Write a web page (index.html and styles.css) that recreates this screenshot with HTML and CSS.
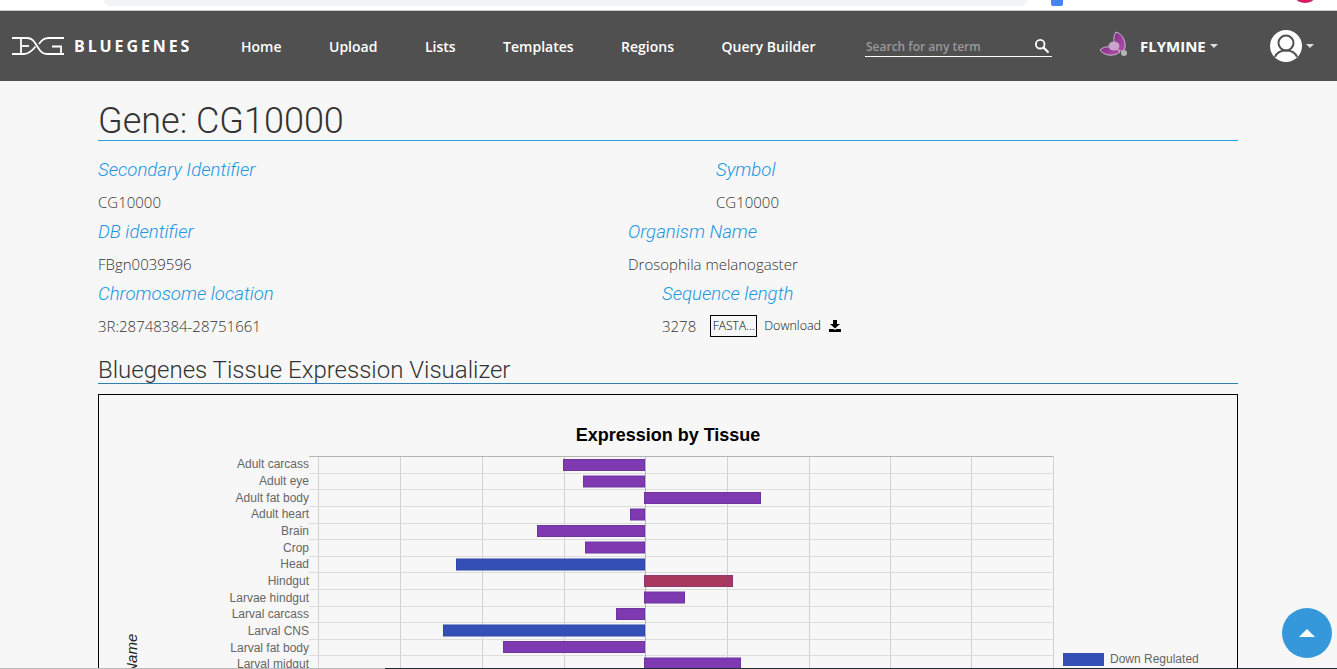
FILE: index.html
```html
<!DOCTYPE html>
<html lang="en">
<head>
	<meta charset="UTF-8">
	<title>BlueGenes</title>
	<link rel="stylesheet" href="styles.css">
</head>
<body>
	<div class="topstrip">
		<div class="urlbar"></div>
		<div class="ext-blue"></div>
		<div class="ext-pink"></div>
	</div>
	<nav class="navbar">
		<a class="brand">
			<svg class="brand-logo" width="54" height="20" viewBox="0 0 54 20" fill="none" stroke="#fff" stroke-width="1.800">
				<path d="M1 2H16C21 2 23 5 26 10C29 15 31 18 36 18H53"/>
				<path d="M1 18H13C18 18 21 15 24.500 10.500"/>
				<path d="M28 8C31 4 33 2 38 2H53"/>
				<path d="M10 2V18"/>
				<path d="M10 10H18"/>
				<path d="M41 10.500H50V18"/>
			</svg>
			<span class="brand-name">BLUEGENES</span>
		</a>
		<ul class="nav-links">
			<li>Home</li>
			<li>Upload</li>
			<li>Lists</li>
			<li>Templates</li>
			<li>Regions</li>
			<li>Query Builder</li>
		</ul>
		<div class="search">
			<span class="search-text">Search for any term</span>
			<svg width="16" height="16" viewBox="0 0 16 16" fill="none" stroke="#fff" stroke-width="1.800">
				<circle cx="6.200" cy="6.200" r="4.300"/>
				<path d="M9.500 9.500L14.500 14.500" stroke-width="2.200"/>
			</svg>
		</div>
		<div class="mine">
			<svg class="mine-logo" width="30" height="27" viewBox="0 0 30 27">
				<defs>
					<linearGradient id="wing" x1="0" y1="0" x2="1" y2="1">
						<stop offset="0" stop-color="#7d2f80"/>
						<stop offset="1" stop-color="#b84fb5"/>
					</linearGradient>
				</defs>
				<path d="M17 1C23 3 27 9 26 17C25 20 22 21 20 19C15 15 13 7 17 1Z" fill="url(#wing)" stroke="#c9b9c9" stroke-width="1"/>
				<path d="M1 19C6 14 14 15 21 21C15 26 5 25 1 19Z" fill="url(#wing)" stroke="#c9b9c9" stroke-width="1"/>
				<ellipse cx="15" cy="15" rx="5.500" ry="4.500" fill="#c9a3cc"/>
				<circle cx="25" cy="22" r="3" fill="#b5b5b5"/>
			</svg>
			<span class="mine-name">FLYMINE</span>
			<span class="caret"></span>
		</div>
		<div class="user">
			<svg width="32" height="32" viewBox="0 0 32 32">
				<circle cx="16" cy="16" r="16" fill="#fff"/>
				<circle cx="16" cy="13" r="7.500" fill="none" stroke="#505050" stroke-width="2"/>
				<path d="M5 27C7 22 11 20.500 16 20.500C21 20.500 25 22 27 27" fill="none" stroke="#505050" stroke-width="2"/>
			</svg>
			<span class="caret"></span>
		</div>
	</nav>

	<main class="report">
		<h1 class="report-title">Gene: CG10000</h1>
		<div class="fields">
			<div class="field-row">
				<div class="field field-left">
					<div class="field-name">Secondary Identifier</div>
					<div class="field-value">CG10000</div>
				</div>
				<div class="field field-symbol">
					<div class="field-name">Symbol</div>
					<div class="field-value">CG10000</div>
				</div>
			</div>
			<div class="field-row">
				<div class="field field-left">
					<div class="field-name">DB identifier</div>
					<div class="field-value">FBgn0039596</div>
				</div>
				<div class="field">
					<div class="field-name">Organism Name</div>
					<div class="field-value">Drosophila melanogaster</div>
				</div>
			</div>
			<div class="field-row">
				<div class="field field-left">
					<div class="field-name">Chromosome location</div>
					<div class="field-value">3R:28748384-28751661</div>
				</div>
				<div class="field field-seq">
					<div class="field-name">Sequence length</div>
					<div class="field-value seq-row">
						<span>3278</span>
						<span class="fasta">FASTA...</span>
						<span class="download">Download</span>
						<svg width="14" height="12" viewBox="0 0 14 12" fill="#000">
							<path d="M5 0H9V4H12L7 8.500L2 4H5Z"/>
							<path d="M1 9H5.500L7 10L8.500 9H13V12H1Z"/>
						</svg>
					</div>
				</div>
			</div>
		</div>
		<h2 class="section-title">Bluegenes Tissue Expression Visualizer</h2>
		<div class="chart-box">
			<svg class="chart" width="1138" height="274" viewBox="0 0 1138 274">
				<text class="chart-title" x="569" y="46">Expression by Tissue</text>
				<g class="grid">
					<path class="grid-v" d="M219 61V274M301 61V274M383 61V274M465 61V274M628 61V274M710 61V274M791 61V274M872 61V274M954 61V274"/>
					<path class="grid-h" d="M210 78H954M210 94H954M210 111H954M210 128H954M210 144H954M210 161H954M210 177H954M210 194H954M210 211H954M210 227H954M210 244H954M210 260H954"/>
					<path class="grid-axis" d="M210 61H954M546 61V274"/>
				</g>
				<g class="labels">
					<text x="210" y="73">Adult carcass</text>
					<text x="210" y="90">Adult eye</text>
					<text x="210" y="107">Adult fat body</text>
					<text x="210" y="123">Adult heart</text>
					<text x="210" y="140">Brain</text>
					<text x="210" y="157">Crop</text>
					<text x="210" y="173">Head</text>
					<text x="210" y="190">Hindgut</text>
					<text x="210" y="207">Larvae hindgut</text>
					<text x="210" y="223">Larval carcass</text>
					<text x="210" y="240">Larval CNS</text>
					<text x="210" y="257">Larval fat body</text>
					<text x="210" y="273">Larval midgut</text>
				</g>
				<g class="bars" transform="translate(-0.500,0)">
					<rect class="mid" x="465" y="64.500" width="81" height="11"/>
					<rect class="mid" x="485" y="81" width="61" height="11"/>
					<rect class="mid" x="546" y="97.500" width="116" height="11"/>
					<rect class="mid" x="532" y="114" width="14" height="11"/>
					<rect class="mid" x="439" y="130.500" width="107" height="11"/>
					<rect class="mid" x="487" y="147" width="59" height="11"/>
					<rect class="down" x="358" y="164" width="188" height="11"/>
					<rect class="up" x="546" y="180.500" width="88" height="11"/>
					<rect class="mid" x="546" y="197" width="40" height="11"/>
					<rect class="mid" x="518" y="213.500" width="28" height="11"/>
					<rect class="down" x="345" y="230" width="201" height="11"/>
					<rect class="mid" x="405" y="246.500" width="141" height="11"/>
					<rect class="mid" x="546" y="263" width="96" height="11"/>
				</g>
				<text class="axis-name" transform="translate(38,327) rotate(-90)">Tissue Name</text>
				<rect class="legend-key" x="964" y="258" width="41" height="13"/>
				<text class="legend" x="1011" y="268">Down Regulated</text>
			</svg>
		</div>
	</main>

	<button class="to-top"><span class="to-top-arrow"></span></button>
	<div class="bottomstrip"></div>
</body>
</html>
```

FILE: styles.css
```css
* {
	box-sizing: border-box;
	margin: 0;
	padding: 0;
}

html, body {
	height: 669px;
	overflow: hidden;
}

body {
	position: relative;
	background-color: #f7f7f7;
	font-family: "Open Sans", "Liberation Sans", sans-serif;
	color: #333;
}

.topstrip {
	position: relative;
	height: 11px;
	background-color: #fff;
	border-bottom: 1px solid #ccc;
}

.urlbar {
	position: absolute;
	left: 103px;
	top: -10px;
	width: 925px;
	height: 16px;
	background-color: #f1f3f4;
	border-radius: 12px;
}

.ext-blue {
	position: absolute;
	left: 1051px;
	top: -6px;
	width: 12px;
	height: 12px;
	background-color: #4285f4;
	border-radius: 2px;
}

.ext-pink {
	position: absolute;
	left: 1296px;
	top: -7px;
	width: 18px;
	height: 10px;
	background-color: #d81b60;
	border-radius: 50%;
}

.navbar {
	display: flex;
	align-items: center;
	height: 70px;
	background-color: #505050;
	color: #fff;
	font-weight: 600;
}

.brand {
	display: flex;
	align-items: center;
	gap: 9px;
	width: 241px;
	padding-left: 11px;
}

.brand-name {
	font-size: 16px;
	font-weight: 700;
	letter-spacing: 2.900px;
}

.nav-links {
	display: flex;
	gap: 47.500px;
	list-style: none;
	font-size: 14px;
	width: 624px;
}

.search {
	display: flex;
	justify-content: space-between;
	align-items: center;
	width: 187px;
	height: 22px;
	padding: 1px 2px 0 1px;
	border-bottom: 1px solid #fff;
}

.search-text {
	font-size: 12px;
	color: #999;
}

.mine {
	display: flex;
	align-items: center;
	margin-left: 47px;
	width: 171px;
}

.mine-logo {
	margin-bottom: 4px;
}

.mine-name {
	font-size: 15px;
	font-weight: 700;
	margin-left: 11px;
	margin-right: 4px;
}

.caret {
	display: inline-block;
	border-left: 4px solid transparent;
	border-right: 4px solid transparent;
	border-top: 4px solid #ddd;
}

.user {
	display: flex;
	align-items: center;
	gap: 4px;
}

.report {
	width: 1140px;
	margin-left: 98px;
}

.report-title {
	margin-top: 19px;
	height: 41px;
	font-family: Roboto, "Liberation Sans", sans-serif;
	font-size: 36px;
	font-weight: 300;
	line-height: 42px;
	border-bottom: 1px solid #2aa3e0;
}

.fields {
	height: 215px;
	padding-top: 18px;
}

.field-row {
	display: flex;
	height: 62px;
}

.field-left {
	width: 530px;
}

.field-symbol {
	margin-left: 88px;
}

.field-seq {
	margin-left: 34px;
}

.field-name {
	height: 29px;
	font-family: Roboto, "Liberation Sans", sans-serif;
	font-size: 18.600px;
	font-weight: 300;
	font-style: italic;
	color: #2196e3;
}

.field-value {
	font-size: 15px;
	font-weight: 300;
	line-height: 28px;
}

.seq-row {
	display: flex;
	align-items: center;
	gap: 7px;
}

.fasta {
	width: 47px;
	height: 22px;
	margin-left: 7px;
	font-size: 12px;
	line-height: 20px;
	text-align: center;
	color: #000;
	border: 1px solid #000;
}

.download {
	font-size: 12.500px;
	color: #111;
}

.section-title {
	height: 28px;
	font-family: Roboto, "Liberation Sans", sans-serif;
	font-size: 24px;
	font-weight: 300;
	line-height: 28px;
	border-bottom: 1px solid #2f7fb5;
}

.chart-box {
	margin-top: 10px;
	height: 275px;
	border: 1px solid #000;
	border-bottom: none;
	overflow: hidden;
}

.chart {
	display: block;
	font-family: "Liberation Sans", sans-serif;
}

.chart-title {
	font-size: 18px;
	font-weight: 700;
	text-anchor: middle;
	fill: #000;
}

.grid path {
	fill: none;
	stroke-width: 1;
	shape-rendering: crispEdges;
}

.grid-v {
	stroke: #d2d2d2;
}

.grid-h {
	stroke: #ddd;
}

.grid-axis {
	stroke: #b4b4b4;
}

.labels text {
	font-size: 12px;
	text-anchor: end;
	fill: #666;
}

.axis-name {
	font-size: 15px;
	font-style: italic;
	fill: #222;
}

.legend {
	font-size: 12px;
	fill: #666;
}

.legend-key {
	fill: #344fb6;
}

.bars rect {
	stroke-width: 1;
}

.mid {
	fill: #7f3ab2;
	stroke: #6c35a0;
}

.down {
	fill: #344fb6;
	stroke: #2f48a6;
}

.up {
	fill: #a9385f;
	stroke: #8f3a6e;
}

.to-top {
	position: absolute;
	right: 5px;
	bottom: 11px;
	width: 50px;
	height: 50px;
	display: flex;
	align-items: center;
	justify-content: center;
	background-color: #3498db;
	border: none;
	border-radius: 50%;
}

.to-top-arrow {
	border-left: 8px solid transparent;
	border-right: 8px solid transparent;
	border-bottom: 8px solid #fff;
}

.bottomstrip {
	position: absolute;
	left: 0;
	right: 0;
	bottom: 0;
	height: 1px;
	background: linear-gradient(to right, #bbb 385px, #1d2d33 385px);
}
```
